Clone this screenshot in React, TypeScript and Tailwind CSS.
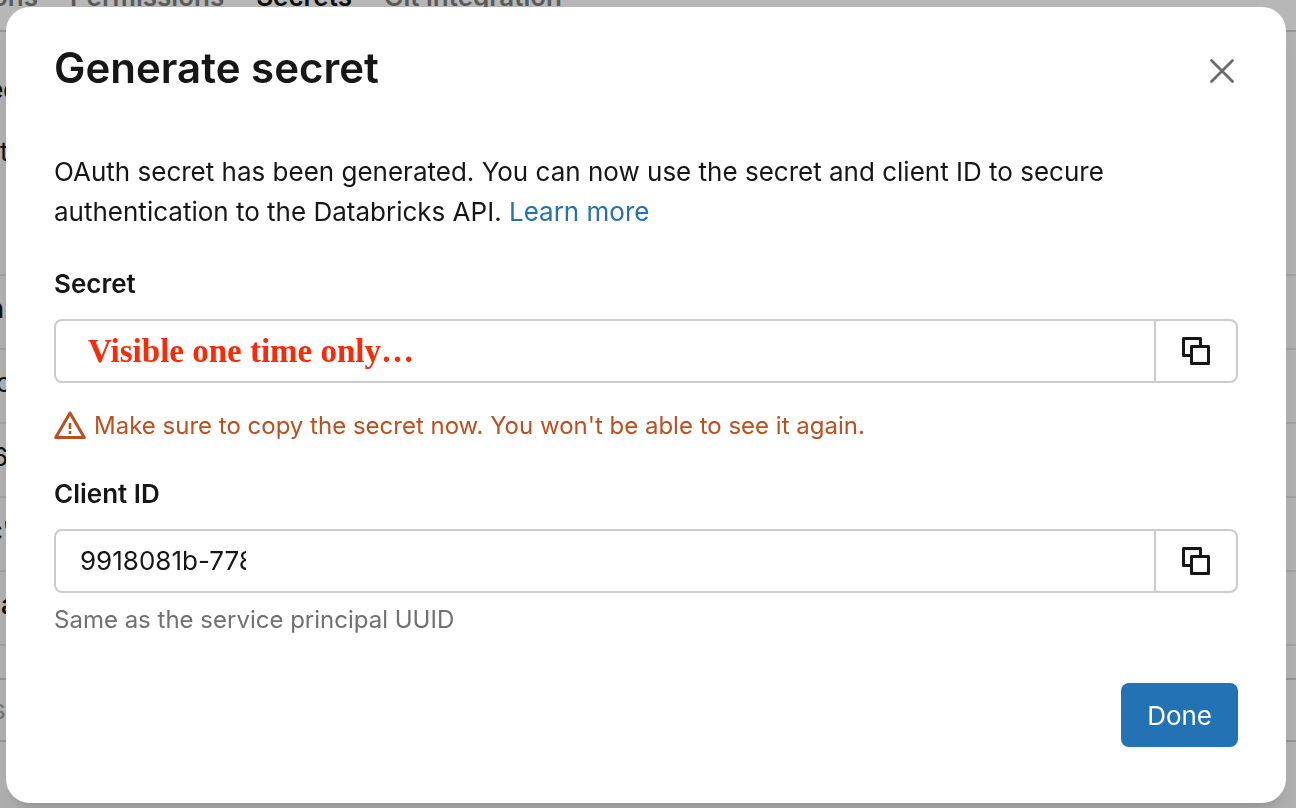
import React, { type ReactNode } from "react";

const tabs = [
  { label: "ons", active: false },
  { label: "Permissions", active: false },
  { label: "Secrets", active: true },
  { label: "Git integration", active: false },
];

const rows = [
  { text: "n", className: "-ml-3 font-semibold" },
  { text: "c", className: "-ml-1" },
  { text: "6", className: "-ml-2" },
  { text: "c'", className: "-ml-3" },
  { text: "a", className: "ml-px font-semibold" },
];

function CopyIcon() {
  return (
    <svg width="32" height="32" viewBox="0 0 32 32" fill="none" stroke="currentColor" strokeWidth="3" strokeLinejoin="round" aria-hidden="true">
      <path d="M11 20.5H3.5V3.5H20.5V11" />
      <path d="M11.5 11.5H28.5V28.5H11.5Z" />
    </svg>
  );
}

function WarningIcon() {
  return (
    <svg className="shrink-0" width="32" height="32" viewBox="0 0 32 32" fill="none" stroke="currentColor" strokeWidth="3" strokeLinejoin="round" aria-hidden="true">
      <path d="M16 3L30.3 27.5H1.7Z" />
      <path d="M16 13V19M16 21V24" strokeWidth="2.6" />
    </svg>
  );
}

function CloseIcon() {
  return (
    <svg width="32" height="32" viewBox="0 0 32 32" fill="none" stroke="currentColor" strokeWidth="2.8" strokeLinecap="round" aria-hidden="true">
      <path d="M5.5 5.5L26.5 26.5M26.5 5.5L5.5 26.5" />
    </svg>
  );
}

interface CopyFieldProps {
  id: string;
  label: string;
  children: ReactNode;
}

function CopyField({ id, label, children }: CopyFieldProps) {
  return (
    <div className="flex flex-col gap-[15px]">
      <label htmlFor={id} className="text-[26px] leading-10 font-semibold">
        {label}
      </label>
      <div className="flex h-16 rounded-lg border-2 border-[#cbcbcb]">
        <div className="flex min-w-0 flex-1 items-center px-6">{children}</div>
        <button
          type="button"
          aria-label={`Copy ${label}`}
          className="flex w-[82px] items-center justify-center border-l-2 border-[#cbcbcb]"
        >
          <CopyIcon />
        </button>
      </div>
    </div>
  );
}

function BackgroundPage() {
  return (
    <div className="min-h-screen overflow-hidden bg-[#b2b2b2] text-[26px] leading-8 text-[#111]">
      <nav className="-mt-[19px] flex gap-8 border-b-2 border-[#969696] bg-[#b7b7b7] pb-[17px]">
        {tabs.map((tab) => (
          <a
            key={tab.label}
            href="#"
            className={
              tab.active
                ? "font-semibold text-[#0c0c0c]"
                : "font-semibold text-[#5a5a5a] first:-ml-2"
            }
          >
            {tab.label}
          </a>
        ))}
      </nav>
      <h2 className="mt-[42px] -ml-3 font-semibold">ed</h2>
      <p className="mt-[30px]">t</p>
      <table className="mt-[106px] w-full border-t-2 border-[#a3a3a3]">
        <tbody>
          {rows.map((row) => (
            <tr key={row.text} className="h-[74px] border-b-2 border-[#a3a3a3]">
              <td className="pb-1.5">
                <div className={row.className}>{row.text}</div>
              </td>
            </tr>
          ))}
        </tbody>
      </table>
      <div className="mt-8 border-y-2 border-[#969696] py-[14px] text-[#777]">
        <div className="-ml-2">s</div>
      </div>
    </div>
  );
}

function App() {
  return (
    <div className="h-screen overflow-hidden font-['Inter',sans-serif]">
      <BackgroundPage />
      <div className="fixed inset-0 pt-[7px] pr-2.5 pl-1.5">
        <div
          role="dialog"
          aria-labelledby="dialog-title"
          className="rounded-3xl bg-white px-12 pt-[33px] pb-14 text-[#161616] shadow-xl"
        >
          <div className="flex items-center justify-between">
            <h1 id="dialog-title" className="text-[42px] leading-[56px] font-semibold">
              Generate secret
            </h1>
            <button type="button" aria-label="Close" className="pt-1.5 text-[#6b6b6b]">
              <CloseIcon />
            </button>
          </div>

          <p className="mt-14 text-[26px] leading-10">
            OAuth secret has been generated. You can now use the secret and client ID to secure
            authentication to the Databricks API.{" "}
            <a href="#" className="text-[#2272b4]">
              Learn more
            </a>
          </p>

          <div className="mt-8">
            <CopyField id="secret" label="Secret">
              <input
                id="secret"
                readOnly
                value="Visible one time only…"
                className="w-full bg-transparent px-2 font-['Liberation_Serif',serif] text-[33px] leading-10 font-bold text-[#f92a05] outline-none"
              />
            </CopyField>
            <div className="mt-[23px] flex items-center gap-2 text-[24px] leading-10 text-[#b9501f]">
              <WarningIcon />
              <span>Make sure to copy the secret now. You won't be able to see it again.</span>
            </div>
          </div>

          <div className="mt-7">
            <CopyField id="client-id" label="Client ID">
              <input
                id="client-id"
                readOnly
                value="9918081b-778"
                className="w-[166px] bg-transparent text-[26px] leading-10 outline-none"
              />
            </CopyField>
            <p className="mt-[7px] text-[24px] leading-10 text-[#707070]">Same as the service principal UUID</p>
          </div>

          <div className="mt-[43px] flex justify-end">
            <button type="button" className="h-16 rounded-lg bg-[#2272b4] px-[26px] text-[26px] text-white">
              Done
            </button>
          </div>
        </div>
      </div>
    </div>
  );
}

export default App;
